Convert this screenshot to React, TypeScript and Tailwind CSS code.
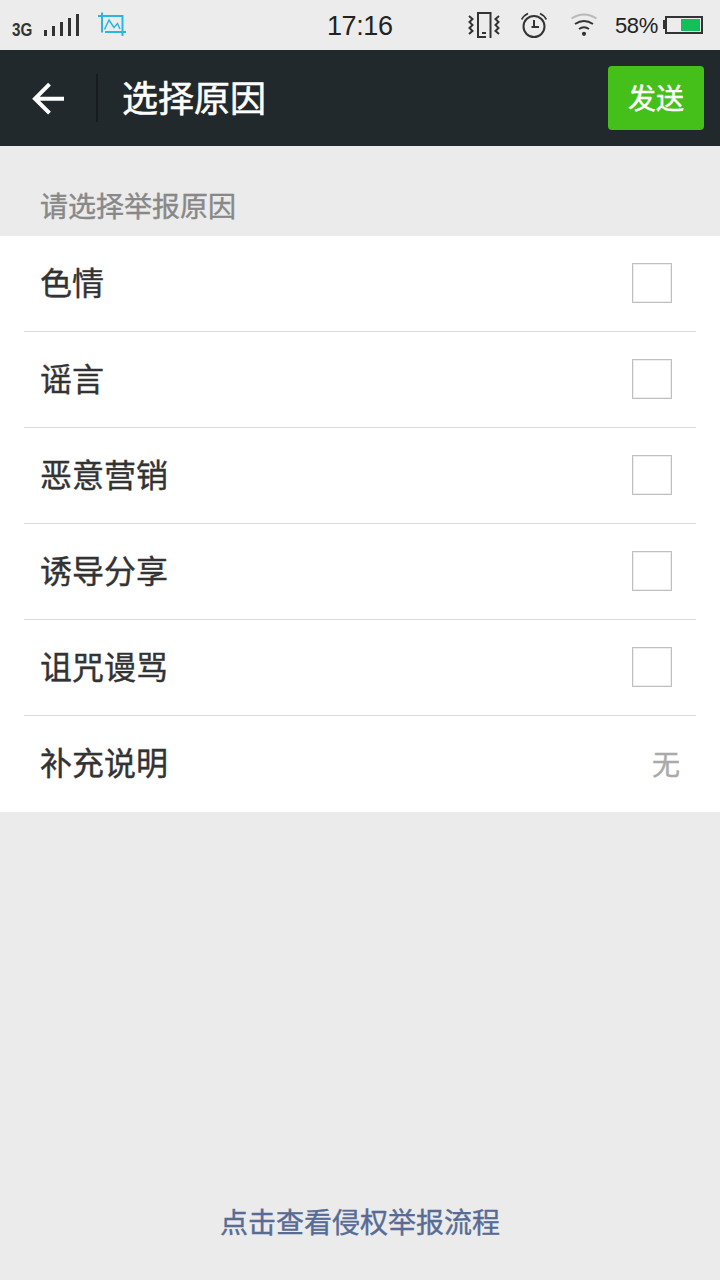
import { useState } from "react";

const reasons = ["色情", "谣言", "恶意营销", "诱导分享", "诅咒谩骂"];

function SignalBars() {
  return (
    <svg width="35" height="22" viewBox="0 0 35 22" fill="#333" shapeRendering="crispEdges">
      <rect x="0" y="16" width="3" height="6" />
      <rect x="8" y="12" width="3" height="10" />
      <rect x="16" y="8" width="3" height="14" />
      <rect x="24" y="4" width="3" height="18" />
      <rect x="32" y="0" width="3" height="22" />
    </svg>
  );
}

function ScreenshotIcon() {
  return (
    <svg width="28" height="24" viewBox="0 0 28 24" fill="none" stroke="#2cb5e3" strokeWidth="2">
      <path d="M4 0.5V20.5M0 4H24.500V24M7 20H28" />
      <path d="M6.500 17.500L11 8L16 15.500L19.500 11.500L22 17" strokeWidth="1.500" />
    </svg>
  );
}

function VibrateIcon() {
  return (
    <svg width="32" height="26" viewBox="0 0 32 26" fill="none" stroke="#333" strokeWidth="2">
      <path d="M18 25H10V1H22.500V26M14 21H18" />
      <path d="M1 4L4.500 7L1.500 10L4.500 13L1.500 16L4.500 19L1 22" />
      <path d="M31 4L27.500 7L30.500 10L27.500 13L30.500 16L27.500 19L31 22" />
    </svg>
  );
}

function AlarmIcon() {
  return (
    <svg width="26" height="26" viewBox="0 0 26 26" fill="none" stroke="#333" strokeWidth="2">
      <circle cx="13" cy="14.500" r="10.500" />
      <path d="M13 8V15H18M10.500 15H13" />
      <path d="M0.800 7.500Q2.500 3.500 7 1.500M19 1.500Q23.500 3.500 25.200 7.500" strokeWidth="1.800" />
    </svg>
  );
}

function WifiIcon() {
  return (
    <svg width="26" height="23" viewBox="0 0 26 23" fill="none" strokeWidth="2">
      <path d="M0.500 5.500Q13 -2.500 25.500 5.500" stroke="#b9b9b9" />
      <path d="M4 11Q13 5 22 11" stroke="#333" />
      <path d="M8 16Q13 12.500 18 16" stroke="#333" />
      <circle cx="13" cy="20.800" r="2.100" fill="#333" />
    </svg>
  );
}

function BatteryIcon() {
  return (
    <svg width="40" height="18" viewBox="0 0 40 18" shapeRendering="crispEdges">
      <rect x="0" y="4" width="2" height="9" fill="#333" />
      <rect x="3" y="1" width="36" height="16" fill="none" stroke="#333" strokeWidth="2" />
      <rect x="18" y="3" width="19" height="12" fill="#12c057" />
    </svg>
  );
}

function StatusBar() {
  return (
    <div className="flex h-[50px] items-start bg-[#ececec] font-['Liberation_Sans'] text-[#222]">
      <span className="mt-[20px] ml-3 w-[32px] origin-left scale-x-[0.8] text-[19px] leading-[20px] font-bold text-[#333]">
        3G
      </span>
      <div className="mt-[14px]">
        <SignalBars />
      </div>
      <div className="mt-3 ml-[19px]">
        <ScreenshotIcon />
      </div>
      <span className="mt-[11px] ml-[201px] w-[141px] text-[27px] leading-[30px] tracking-[-0.4px]">17:16</span>
      <div className="mt-3">
        <VibrateIcon />
      </div>
      <div className="mt-3 ml-[21px]">
        <AlarmIcon />
      </div>
      <div className="mt-[13px] ml-6">
        <WifiIcon />
      </div>
      <span className="mt-[13px] ml-[18px] w-[48px] text-[22px] leading-[25px] tracking-[-0.4px]">58%</span>
      <div className="mt-4">
        <BatteryIcon />
      </div>
    </div>
  );
}

export default function App() {
  const [selected, setSelected] = useState<string[]>([]);

  const toggle = (reason: string) => {
    setSelected((prev) =>
      prev.includes(reason) ? prev.filter((r) => r !== reason) : [...prev, reason]
    );
  };

  return (
    <div className="flex h-[1280px] w-[720px] flex-col bg-[#ebebeb] font-['Noto_Sans_CJK_SC',sans-serif] text-[#333] [-webkit-text-stroke:0.4px]">
      <div className="[-webkit-text-stroke:0px]">
        <StatusBar />
      </div>

      <header className="flex h-24 items-center bg-[#22292c] pr-4 text-white">
        <button className="ml-8">
          <svg width="32" height="34" viewBox="0 0 32 34" fill="none" stroke="#fff" strokeWidth="4">
            <path d="M32 17.700H3M17.500 3.200L3 17.700L17.500 32.200" />
          </svg>
        </button>
        <div className="ml-8 h-12 w-0.5 bg-[#161b1c]" />
        <h1 className="ml-6 pb-1 text-[36px] leading-[48px] [-webkit-text-stroke:0.6px]">选择原因</h1>
        <button className="ml-auto h-16 w-24 rounded bg-[#45c01a] pb-0.5 text-[28px] leading-[62px]">
          发送
        </button>
      </header>

      <p className="h-[90px] pt-[39px] pl-10 text-[28px] leading-[40px] text-[#888]">
        请选择举报原因
      </p>

      <div className="h-[576px] bg-white px-6">
        {reasons.map((reason) => (
          <div
            key={reason}
            onClick={() => toggle(reason)}
            className="flex h-24 items-start justify-between border-b border-[#d9d9d9] px-4"
          >
            <span className="pt-[21px] text-[32px] leading-[48px]">{reason}</span>
            <span
              className={`mt-[27px] mr-2 h-10 w-10 border border-[#bfbfbf] inset-ring inset-ring-[#eee] ${
                selected.includes(reason) ? "bg-[#45c01a]" : "bg-white"
              }`}
            />
          </div>
        ))}
        <div className="flex h-24 items-start justify-between px-4 leading-[48px]">
          <span className="pt-[21px] text-[32px]">补充说明</span>
          <span className="pt-[23px] text-[28px] text-[#aaa]">无</span>
        </div>
      </div>

      <a className="mt-auto mb-[35px] text-center text-[28px] leading-[48px] text-[#576b95]">
        点击查看侵权举报流程
      </a>
    </div>
  );
}
